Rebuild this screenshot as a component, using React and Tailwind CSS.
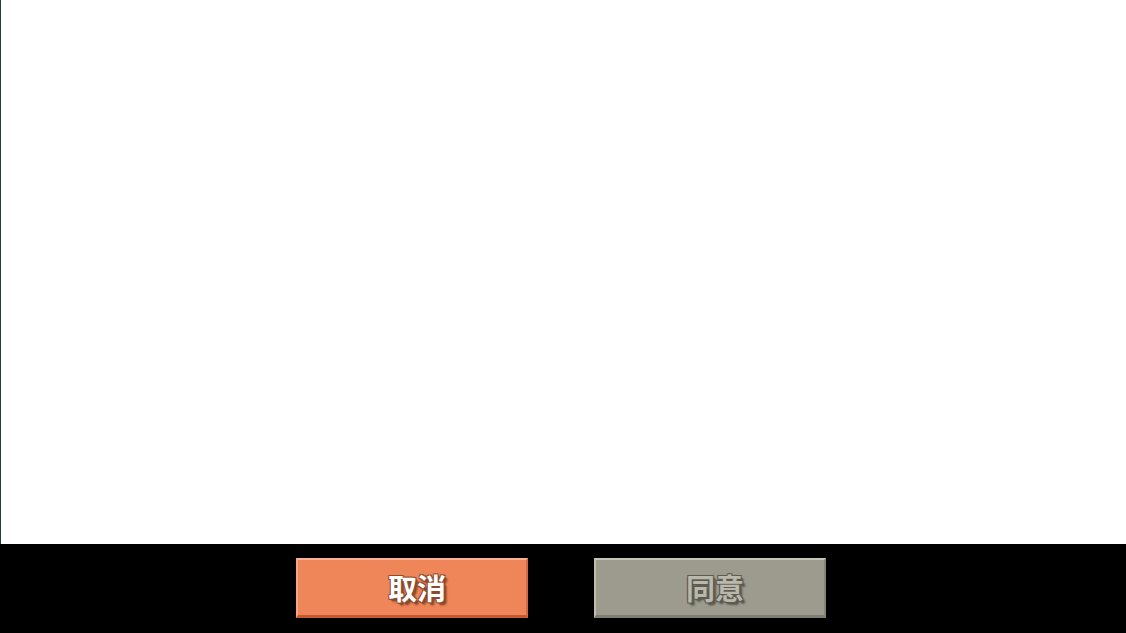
export default function App() {
  const font = { fontFamily: '"Noto Sans CJK SC", "Noto Sans", sans-serif' };
  return (
    <div className="w-[1126px] h-[633px] flex flex-col bg-black overflow-hidden" style={font}>
      <div className="h-[544px] bg-white border-l border-[#263a3a]" />
      <div className="flex-1 flex justify-center items-start pt-[14px] pr-[4px] gap-[66px]">
        <button className="w-[232px] h-[60px] flex items-center justify-center pl-[10px] bg-[#ef8659] border-t-2 border-l-2 border-b-[3px] border-r-2 border-t-[#f7b394] border-l-[#f5a584] border-b-[#c35a34] border-r-[#d06a43] text-white text-[29px] font-bold leading-none [text-shadow:-1px_-1px_0_#8b4a2e,1px_-1px_0_#8b4a2e,-1px_1px_0_#8b4a2e,1px_1px_0_#8b4a2e,2px_2px_1px_#8b4a2e,3px_3px_2px_#8b4a2e]">
          取消
        </button>
        <button className="w-[232px] h-[60px] flex items-center justify-center pl-[10px] bg-[#9c9b8e] border-t-2 border-l-2 border-b-[3px] border-r-2 border-t-[#c6c5b8] border-l-[#bebdb0] border-b-[#7e7d72] border-r-[#85847a] text-[#b9b8ab] text-[29px] font-bold leading-none [text-shadow:-1px_-1px_0_#5c5b53,1px_-1px_0_#5c5b53,-1px_1px_0_#5c5b53,1px_1px_0_#5c5b53,2px_2px_1px_#5c5b53,3px_3px_2px_#5c5b53]">
          同意
        </button>
      </div>
    </div>
  );
}
